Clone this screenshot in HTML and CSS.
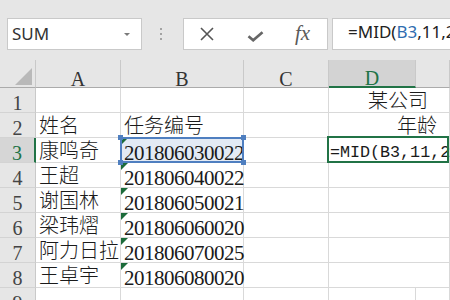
FILE: index.html
```html
<!DOCTYPE html>
<html>
<head>
<meta charset="utf-8">
<link rel="stylesheet" href="styles.css">
</head>
<body>
<div class="toolbar">
  <div class="namebox"><span class="nb-text">SUM</span><span class="caret"></span></div>
  <div class="dots"><i></i><i></i><i></i></div>
  <div class="fbtns">
    <svg class="ic-x" width="14" height="14" viewBox="0 0 14 14"><path d="M1 1L13 13M13 1L1 13" stroke="#555" stroke-width="1.6" fill="none"/></svg>
    <svg class="ic-ok" width="17" height="11" viewBox="0 0 17 11"><path d="M1.5 5.2L6.2 9.3L15.5 1.2" stroke="#666" stroke-width="2.6" fill="none" stroke-linejoin="miter"/></svg>
    <span class="fx">fx</span>
  </div>
  <div class="finput">=MID(<span class="refc">B3</span>,11,2)</div>
</div>
<div class="sheet">
  <div class="ch corner"></div>
  <div class="ch">A</div>
  <div class="ch">B</div>
  <div class="ch">C</div>
  <div class="ch active">D</div>
  <div class="ch"></div>

  <div class="rh">1</div>
  <div class="c"></div><div class="c"></div><div class="c"></div>
  <div class="c span2 d1">某公司</div>

  <div class="rh">2</div>
  <div class="c">姓名</div><div class="c">任务编号</div><div class="c"></div>
  <div class="c span2 d2">年龄</div>

  <div class="rh active">3</div>
  <div class="c">康鸣奇</div>
  <div class="c num sel">201806030022<i class="h tl"></i><i class="h tr"></i><i class="h bl"></i><i class="h br"></i></div>
  <div class="c"></div>
  <div class="c span2 edit">=MID(B3,11,2</div>

  <div class="rh">4</div>
  <div class="c">王超</div><div class="c num">201806040022</div><div class="c"></div><div class="c span2"></div>

  <div class="rh">5</div>
  <div class="c">谢国林</div><div class="c num">201806050021</div><div class="c"></div><div class="c span2"></div>

  <div class="rh">6</div>
  <div class="c">梁玮熠</div><div class="c num">201806060020</div><div class="c"></div><div class="c span2"></div>

  <div class="rh">7</div>
  <div class="c">阿力日拉</div><div class="c num">201806070025</div><div class="c"></div><div class="c span2"></div>

  <div class="rh">8</div>
  <div class="c">王卓宇</div><div class="c num">201806080020</div><div class="c"></div><div class="c span2"></div>

  <div class="rh">9</div>
  <div class="c"></div><div class="c"></div><div class="c"></div><div class="c"></div><div class="c"></div>
</div>
</body>
</html>
```
FILE: styles.css
```css
* { box-sizing: border-box; }
html, body { margin: 0; height: 300px; overflow: hidden; background: #fff; }
body { font-family: "Noto Sans CJK SC", sans-serif; }

.toolbar {
  height: 60px;
  background: #e6e6e6;
  display: flex;
  align-items: flex-start;
  padding: 18px 0 0 7px;
  overflow: hidden;
}
.namebox {
  width: 135px; height: 32px; flex: none;
  background: #fff;
  border: 1px solid #c9c9c9;
  display: flex;
  padding-left: 4px;
  font-family: "Noto Sans", sans-serif;
  font-size: 17px;
  line-height: 29px;
  color: #333;
}
.caret {
  margin: 14px 11px 0 auto;
  width: 0; height: 0;
  border-left: 3px solid transparent;
  border-right: 3px solid transparent;
  border-top: 3px solid #7a7a7a;
}
.dots {
  flex: none;
  margin: 10px 0 0 18px;
  width: 2px;
  display: flex; flex-direction: column; gap: 3px;
}
.dots i { display: block; width: 2px; height: 2px; background: #a3a3a3; }
.fbtns {
  flex: none;
  margin-left: 21px;
  width: 145px; height: 32px;
  background: #fff;
  border: 1px solid #c9c9c9;
  display: flex; align-items: flex-start;
  padding-left: 16px;
}
.ic-x { margin-top: 8px; }
.ic-ok { margin: 12px 0 0 33px; }
.fx {
  margin-left: 31px;
  font-family: "Liberation Serif", serif;
  font-style: italic;
  font-size: 21px;
  line-height: 28px;
  color: #5a5a5a;
}
.finput {
  flex: none;
  margin-left: 4px;
  width: 140px; height: 32px;
  background: #fff;
  border: 1px solid #c9c9c9;
  border-right: none;
  padding-left: 15px;
  font-family: "Noto Sans", sans-serif;
  font-size: 17px;
  line-height: 26px;
  color: #222;
  white-space: nowrap;
}
.refc { color: #2f6db0; }

.sheet {
  display: grid;
  grid-template-columns: 36px 85px 123px 85px 87px 34px;
  grid-template-rows: 28px repeat(9, 25px);
}
.ch {
  background: #e6e6e6;
  border-right: 1px solid #c9c9c9;
  border-bottom: 1px solid #ababab;
  text-align: center;
  font-family: "Liberation Serif", serif;
  font-size: 20px;
  line-height: 38px;
  color: #333;
  overflow: hidden;
}
.ch.active {
  background: #d3d3d3;
  border-bottom: 2px solid #217346;
  color: #217346;
  line-height: 36px;
}
.corner { position: relative; }
.corner::after {
  content: "";
  position: absolute;
  right: 3px; bottom: 2px;
  width: 0; height: 0;
  border-left: 17px solid transparent;
  border-bottom: 17px solid #b9b9b9;
}
.rh {
  background: #e6e6e6;
  border-right: 1px solid #c9c9c9;
  border-bottom: 1px solid #d3d3d3;
  text-align: center;
  font-family: "Liberation Serif", serif;
  font-size: 20px;
  line-height: 30px;
  color: #444;
  overflow: hidden;
}
.rh.active {
  background: #d6d6d6;
  border-right: 2px solid #217346;
  color: #217346;
}
.c {
  border-right: 1px solid #d9d9d9;
  border-bottom: 1px solid #d9d9d9;
  padding-left: 3px;
  white-space: nowrap;
  font-size: 20px;
  font-weight: 300;
  line-height: 24px;
  color: #1a1a1a;
  position: relative;
}
.span2 { grid-column: span 2; }
.d1 { padding-left: 39px; }
.d2 { padding-left: 68px; }
.num {
  font-family: "Liberation Serif", serif;
  font-weight: 400;
  font-size: 21px;
  letter-spacing: -0.5px;
  line-height: 30px;
}
.num::before {
  content: "";
  position: absolute;
  left: 0; top: 0;
  width: 0; height: 0;
  border-top: 7px solid #1b6b3a;
  border-right: 7px solid transparent;
}
.sel { background: #e3eaf4; }
.sel::after {
  content: "";
  position: absolute;
  left: -1px; top: -1px; right: -1px; bottom: -1px;
  border: 2px solid #4f7fc0;
}
.h {
  position: absolute;
  width: 5px; height: 5px;
  background: #4f7fc0;
  z-index: 2;
}
.h.tl { left: -3px; top: -3px; }
.h.tr { right: -3px; top: -3px; }
.h.bl { left: -3px; bottom: -3px; }
.h.br { right: -3px; bottom: -3px; }
.edit {
  padding-left: 1px;
  font-family: "Liberation Mono", monospace;
  font-weight: 400;
  font-size: 16.7px;
  line-height: 30px;
  color: #1a1a1a;
  overflow: visible;
}
.edit::after {
  content: "";
  position: absolute;
  left: -2px; top: -2px; right: 0; bottom: -1px;
  border: 2px solid #217346;
}
```
